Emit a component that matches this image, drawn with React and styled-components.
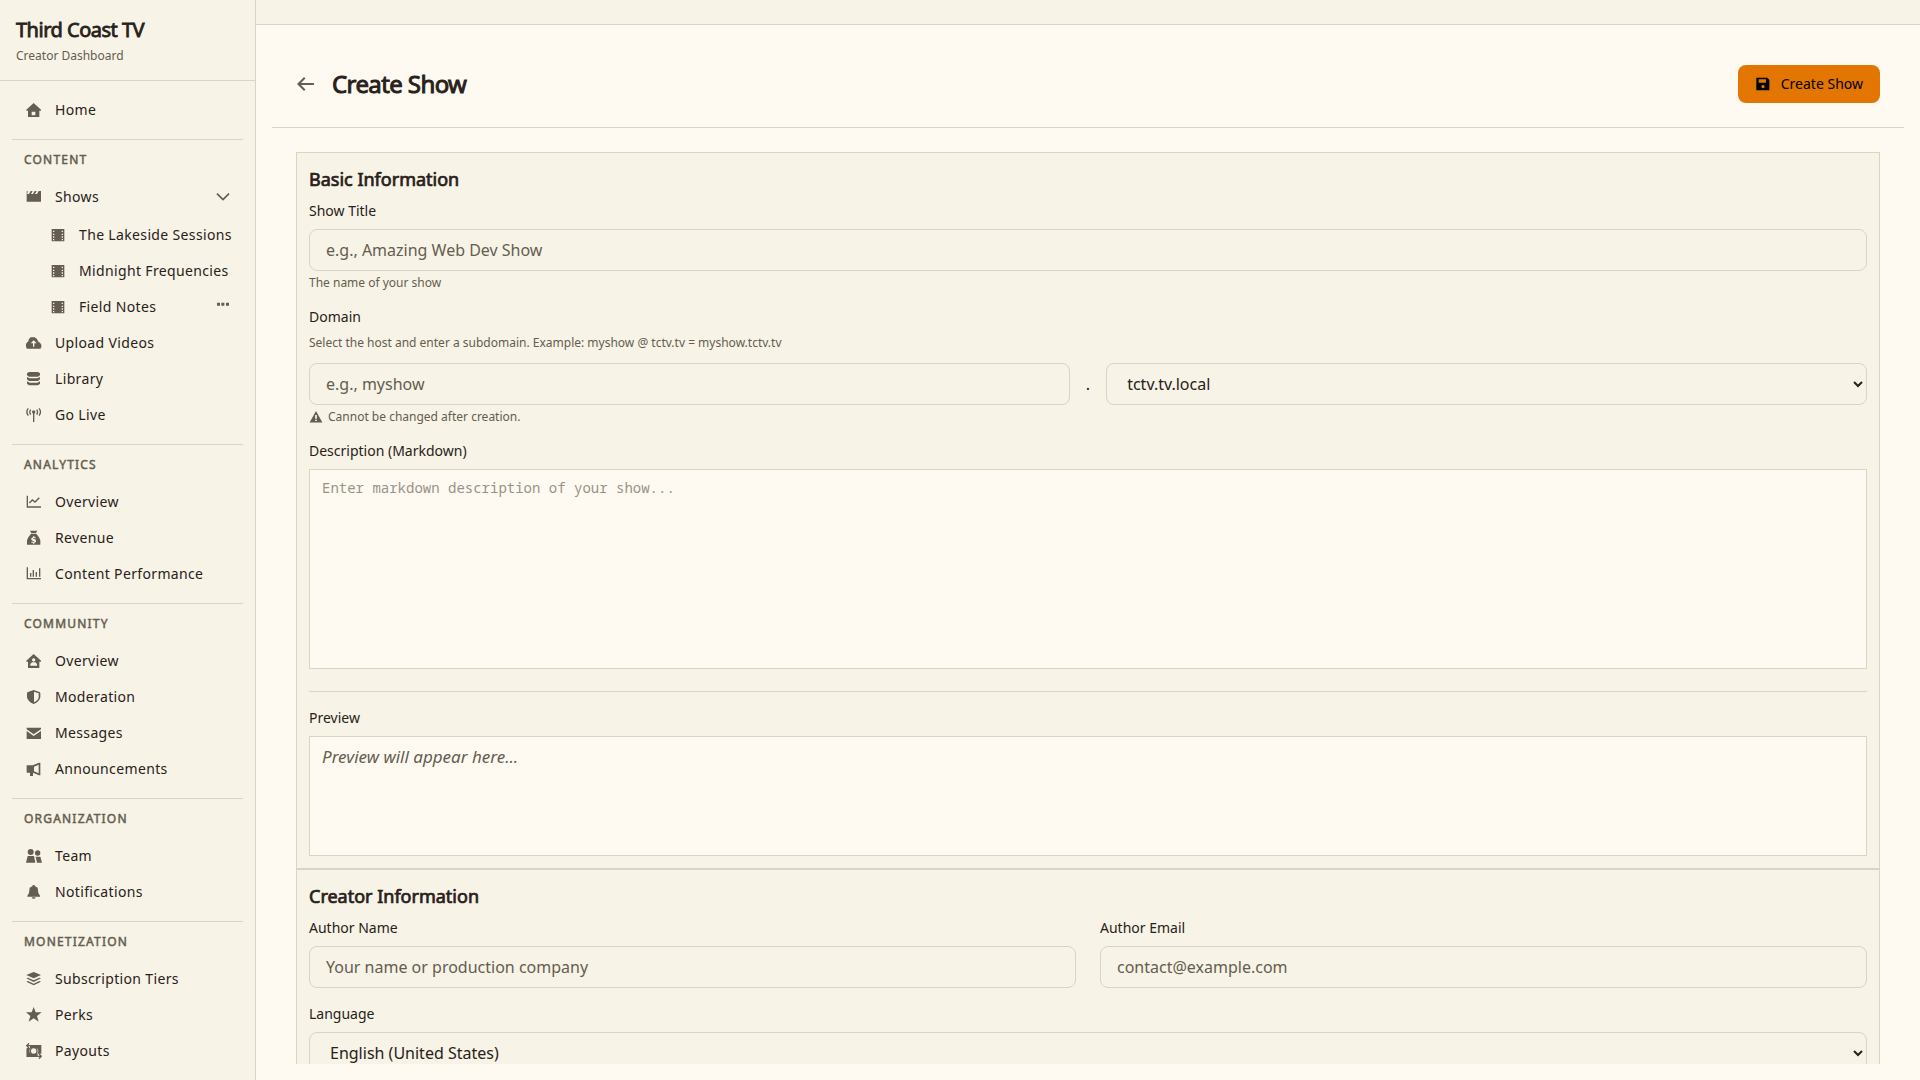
import { useState } from 'react';
import styled, { createGlobalStyle, css } from 'styled-components';

const colors = {
  page: '#fffaf1',
  panel: '#f7f3e6',
  line: '#d9d5c3',
  text: '#28211a',
  muted: '#645d50',
  accent: '#e27600',
};

const GlobalStyle = createGlobalStyle`
  * { box-sizing: border-box; }
  body { margin: 0; background: ${colors.page}; color: ${colors.text}; font-family: "Noto Sans", sans-serif; font-size: 16px; }
  h1, h2, p { margin: 0; }
`;

// headings use the regular face with a thin stroke instead of the bold face
const heavy = css`font-weight: 400; -webkit-text-stroke: 0.04em currentColor;`;

const Shell = styled.div`display: flex; height: 100vh;`;

const Sidebar = styled.aside`
  flex: 0 0 256px;
  background: ${colors.panel};
  border-right: 1px solid ${colors.line};
  overflow: auto;
  scrollbar-width: none;
`;
const Brand = styled.div`padding: 16px; border-bottom: 1px solid ${colors.line};`;
const BrandName = styled.p`${heavy} font-size: 20px; line-height: 28px; letter-spacing: -0.025em;`;
const BrandSub = styled.p`margin-top: 4px; font-size: 12px; line-height: 16px; color: ${colors.muted};`;
const Nav = styled.nav`padding: 11px 12px;`;
const NavSection = styled.div`
  & + & { margin-top: 11px; border-top: 1px solid ${colors.line}; }
`;
const NavTitle = styled.h2`
  ${heavy}
  padding: 12px 12px 11px;
  font-size: 12px;
  line-height: 16px;
  letter-spacing: 0.1em;
  text-transform: uppercase;
  color: ${colors.muted};
`;
const NavRow = styled.div`display: flex; align-items: center; height: 36px; padding: 0 11px 0 12px;`;
const NavLink = styled.a`
  display: flex;
  align-items: center;
  flex: 1;
  gap: 11px;
  color: ${colors.text};
  font-size: 14px;
  line-height: 20px;
  letter-spacing: 0.025em;
  text-decoration: none;
  white-space: nowrap;
`;
const IconBox = styled.span`display: flex; justify-content: center; flex: 0 0 20px; color: ${colors.muted};`;
const SubList = styled.div`padding: 2px 0 0 24px;`;
const IconButton = styled.button`
  display: flex;
  padding: 0;
  border: none;
  background: none;
  color: ${colors.muted};
  cursor: pointer;
`;

const Main = styled.div`flex: 1; min-width: 0; display: flex; flex-direction: column;`;
const TopBar = styled.div`flex: 0 0 25px; background: ${colors.panel}; border-bottom: 1px solid ${colors.line};`;
const Content = styled.main`flex: 1; min-height: 0; padding: 16px; display: flex;`;
const Scroller = styled.div`flex: 1; min-width: 0; overflow: auto; scrollbar-width: none;`;
const PageHeader = styled.header`
  display: flex;
  justify-content: space-between;
  align-items: center;
  padding: 24px;
  border-bottom: 1px solid ${colors.line};
`;
const TitleGroup = styled.div`display: flex; align-items: center; gap: 16px;`;
const PageTitle = styled.h1`${heavy} font-size: 24px; line-height: 32px; letter-spacing: -0.025em;`;
const SaveButton = styled.button`
  display: flex;
  align-items: center;
  gap: 10px;
  height: 38px;
  padding: 0 17px;
  border: none;
  border-radius: 8px;
  background: ${colors.accent};
  color: #000;
  font: 14px/20px "Noto Sans", sans-serif;
  cursor: pointer;
`;

const Form = styled.form`padding: 24px;`;
const Panel = styled.section`
  display: flex;
  flex-direction: column;
  gap: 16px;
  padding: 12px;
  background: ${colors.panel};
  border: 1px solid ${colors.line};
`;
const PanelTitle = styled.h2`${heavy} margin-bottom: -8px; font-size: 18px; line-height: 28px;`;
const Field = styled.div`flex: 1; min-width: 0;`;
const Label = styled.label`display: block; margin-bottom: 8px; font-size: 14px; line-height: 20px;`;
const Hint = styled.p`
  display: flex;
  align-items: center;
  gap: 5px;
  margin: ${p => p.$above ? '0 0 12px' : '4px 0 0'};
  color: ${colors.muted};
  font-size: 12px;
  line-height: 16px;
`;
const Input = styled.input`
  display: block;
  width: 100%;
  height: 42px;
  padding: 0 16px;
  border: 1px solid ${colors.line};
  border-radius: 8px;
  background: ${colors.panel};
  color: ${colors.text};
  font: 16px "Noto Sans", sans-serif;
  &::placeholder { color: ${colors.muted}; opacity: 1; }
`;
const Select = styled(Input).attrs({ as: 'select' })``;
const DomainRow = styled.div`display: flex; align-items: center; gap: 16px;`;
const Columns = styled.div`display: grid; grid-template-columns: 1fr 1fr; gap: 24px;`;
const TextArea = styled.textarea`
  display: block;
  width: 100%;
  height: 200px;
  padding: 8px 12px;
  border: 1px solid ${colors.line};
  background: ${colors.page};
  color: ${colors.text};
  font: 14px/20px "Noto Sans Mono", "DejaVu Sans Mono", monospace;
  resize: none;
  &::placeholder { color: #979388; opacity: 1; }
`;
const PreviewField = styled(Field)`
  margin-top: 6px;
  padding-top: 16px;
  border-top: 1px solid ${colors.line};
`;
const PreviewLabel = styled.p`margin-bottom: 8px; font-size: 14px; line-height: 20px;`;
const Preview = styled.div`
  min-height: 120px;
  padding: 8px 12px;
  border: 1px solid ${colors.line};
  background: ${colors.page};
  color: ${colors.muted};
  font-size: 17px;
  line-height: 24px;
  font-style: italic;
`;

const fill = { fill: 'currentColor', fillRule: 'evenodd' };
const line = (width) => ({ fill: 'none', stroke: 'currentColor', strokeWidth: width });

// all icons share a 48 unit grid
const icons = {
  home: <path {...fill} d="M23 3 45 23v3h-5v19H6V26H1v-3ZM17 29v11h11V29Z" />,
  clapper: <path {...fill} d="M2 7h4l-3 8h6l5-9h6l-5 9h6l5-9h6l-5 9h6l5-9h7v32H2Z" />,
  film: <path {...fill} d="M5 6h38v37H5Zm4 5v4h4v-4Zm0 9v4h4v-4Zm0 8v4h4v-4Zm0 8v4h4v-4ZM35 11v4h4v-4Zm0 9v4h4v-4Zm0 8v4h4v-4Zm0 8v4h4v-4Z" />,
  cloud: <path {...fill} d="M3 41 0 36V27l4-6h2l3-9 5-5h12l7 5 4 8 5 3 4 6v8l-3 4ZM23 16l-9 9h7v10h4V25h7Z" />,
  database: <g fill="currentColor"><path d="M9 3h27l6 4v6l-6 4H9l-6-4V7Z" /><path d="M3 18l8 4h23l8-4v7l-6 5H9l-6-5Z" /><path d="M3 31l8 4h23l8-4v7l-6 5H9l-6-5Z" /></g>,
  antenna: <g {...line(4)}><path d="M23 17v28" /><circle cx="23" cy="15" r="3" fill="currentColor" /><path d="M14 8q-5 7 0 15M32 8q5 7 0 15M7 4q-9 11 0 22M39 4q9 11 0 22" /></g>,
  lineChart: <path {...line(4)} d="M4 5v34h41M10 27l9-9 8 6 13-13" />,
  bag: <path {...fill} d="M12 2h22l-4 7H16ZM15 11h16l8 11 4 9v13H3V31l4-9ZM21 19v3l-5 3v4l3 3 6 2v1h-9v3h5v3h4v-3l5-2v-5l-3-3-6-2v-1h8v-3h-4v-3Z" />,
  barChart: <path {...line(4)} d="M4 4v34h41M14 21v11M22 12v20M31 18v14M41 7v25" />,
  houseUser: <path {...fill} d="M23 3 45 23v3h-5v19H6V26H1v-3ZM23 16a5 5 0 1 0 .1 0ZM13 38h20v-5l-5-5H18l-5 5Z" />,
  shield: <path {...fill} d="M23 3 38 8q5 1 5 5v12q-2 13-20 20Q5 38 3 25V13q0-4 5-5ZM24 8v32q13-6 14-15V13Z" />,
  mail: <g fill="currentColor"><path d="M2 8h43v5L23 28 2 13Z" /><path d="M2 18l21 15 22-15v24H2Z" /></g>,
  megaphone: <path {...fill} d="M2 13h18L39 5h4v38h-4l-18-8v10h-9V35H2ZM24 17v14l14 6V11Z" />,
  team: <g fill="currentColor"><circle cx="14" cy="12" r="9" /><circle cx="35" cy="15" r="8" /><path d="M5 24h19l4 20H0ZM29 26h14l5 18H33Z" /></g>,
  bell: <path {...fill} d="M20 3h6v3l9 5 2 16 5 8v3H4v-3l5-8 2-16 9-5ZM17 40h12l-3 4h-6Z" />,
  layers: <g fill="currentColor"><path d="M23 3 45 12 23 22 1 12Z" /><path d="M1 22l5-2 17 8 17-8 5 2-22 11ZM1 32l5-2 17 8 17-8 5 2-22 11Z" /></g>,
  star: <path {...fill} d="m23 0 6 16h18L33 27l5 17-15-10L8 44l5-17L0 16h17Z" />,
  payout: <g {...line(4)}><path d="M13 8H2M9 1 2 8l7 7M34 40h12M39 33l7 7-7 7" /><path d="M15 8h28v22M31 40H4V18" /><path {...fill} d="M14 8h30v22h-7a13 13 0 0 0-4-17H14ZM4 17h6a13 13 0 0 0 4 18h19v5H4Z" /><circle cx="23" cy="24" r="10" /></g>,
  chevron: <path {...line(5)} d="M3 14 21 32 39 14" />,
  dots: <path {...fill} d="M3 11h9v9H3ZM16 11h9v9h-9ZM30 11h9v9h-9Z" />,
  back: <path {...line(5)} d="M43 24H7M21 9 6 24l15 15" />,
  save: <path {...fill} d="M4 5h33l6 7v31H4ZM11 10v10h22V10ZM24 27a5 5 0 1 0 .1 0Z" />,
  warning: <path {...fill} d="M24 3 46 43H2ZM21 17v13h6V17ZM21 33v5h6v-5Z" />,
};

function Icon({ name, size = 16 }) {
  return <svg width={size} height={size} viewBox="0 0 48 48" aria-hidden="true">{icons[name]}</svg>;
}

const sections = [
  { items: [['home', 'Home']] },
  { title: 'Content', items: [['clapper', 'Shows'], ['cloud', 'Upload Videos'], ['database', 'Library'], ['antenna', 'Go Live']] },
  { title: 'Analytics', items: [['lineChart', 'Overview'], ['bag', 'Revenue'], ['barChart', 'Content Performance']] },
  { title: 'Community', items: [['houseUser', 'Overview'], ['shield', 'Moderation'], ['mail', 'Messages'], ['megaphone', 'Announcements']] },
  { title: 'Organization', items: [['team', 'Team'], ['bell', 'Notifications']] },
  { title: 'Monetization', items: [['layers', 'Subscription Tiers'], ['star', 'Perks'], ['payout', 'Payouts']] },
];
const shows = ['The Lakeside Sessions', 'Midnight Frequencies', 'Field Notes'];

function NavItem({ icon, label, children }) {
  return (
    <NavRow>
      <NavLink href="#">
        <IconBox><Icon name={icon} /></IconBox>
        {label}
      </NavLink>
      {children}
    </NavRow>
  );
}

function ShowsItem() {
  const [open, setOpen] = useState(true);

  return (
    <>
      <NavItem icon="clapper" label="Shows">
        <IconButton type="button" aria-label="Toggle shows" aria-expanded={open} onClick={() => setOpen(!open)}>
          <Icon name="chevron" />
        </IconButton>
      </NavItem>
      {open && (
        <SubList>
          {shows.map((show, i) => (
            <NavItem key={show} icon="film" label={show}>
              {i === shows.length - 1 && (
                <IconButton type="button" aria-label="More shows"><Icon name="dots" /></IconButton>
              )}
            </NavItem>
          ))}
        </SubList>
      )}
    </>
  );
}

export default function App() {
  const [form, setForm] = useState({ title: '', subdomain: '', host: 'tctv.tv.local', description: '', author: '', email: '', language: 'en-US' });
  const bind = (name) => ({ id: name, name, value: form[name], onChange: e => setForm({ ...form, [name]: e.target.value }) });

  return (
    <Shell>
      <GlobalStyle />
      <Sidebar>
        <Brand>
          <BrandName>Third Coast TV</BrandName>
          <BrandSub>Creator Dashboard</BrandSub>
        </Brand>
        <Nav>
          {sections.map(({ title, items }) => (
            <NavSection key={title || 'home'}>
              {title && <NavTitle>{title}</NavTitle>}
              {items.map(([icon, label]) => (
                label === 'Shows' ? <ShowsItem key={label} /> : <NavItem key={label} icon={icon} label={label} />
              ))}
            </NavSection>
          ))}
        </Nav>
      </Sidebar>
      <Main>
        <TopBar />
        <Content>
          <Scroller>
            <PageHeader>
              <TitleGroup>
                <IconButton type="button" aria-label="Back"><Icon name="back" size={20} /></IconButton>
                <PageTitle>Create Show</PageTitle>
              </TitleGroup>
              <SaveButton type="submit" form="show-form"><Icon name="save" />Create Show</SaveButton>
            </PageHeader>
            <Form id="show-form" onSubmit={e => e.preventDefault()}>
              <Panel>
                <PanelTitle>Basic Information</PanelTitle>
                <Field>
                  <Label htmlFor="title">Show Title</Label>
                  <Input {...bind('title')} placeholder="e.g., Amazing Web Dev Show" />
                  <Hint>The name of your show</Hint>
                </Field>
                <Field>
                  <Label htmlFor="subdomain">Domain</Label>
                  <Hint $above>Select the host and enter a subdomain. Example: myshow @ tctv.tv = myshow.tctv.tv</Hint>
                  <DomainRow>
                    <Field><Input {...bind('subdomain')} placeholder="e.g., myshow" /></Field>
                    <span>.</span>
                    <Field>
                      <Select {...bind('host')} aria-label="Host">
                        <option>tctv.tv.local</option>
                      </Select>
                    </Field>
                  </DomainRow>
                  <Hint><Icon name="warning" size={14} />Cannot be changed after creation.</Hint>
                </Field>
                <Field>
                  <Label htmlFor="description">Description (Markdown)</Label>
                  <TextArea {...bind('description')} placeholder="Enter markdown description of your show..." />
                </Field>
                <PreviewField>
                  <PreviewLabel>Preview</PreviewLabel>
                  <Preview>{form.description || 'Preview will appear here...'}</Preview>
                </PreviewField>
              </Panel>
              <Panel>
                <PanelTitle>Creator Information</PanelTitle>
                <Columns>
                  <Field>
                    <Label htmlFor="author">Author Name</Label>
                    <Input {...bind('author')} placeholder="Your name or production company" />
                  </Field>
                  <Field>
                    <Label htmlFor="email">Author Email</Label>
                    <Input {...bind('email')} type="email" placeholder="contact@example.com" />
                  </Field>
                </Columns>
                <Field>
                  <Label htmlFor="language">Language</Label>
                  <Select {...bind('language')}>
                    <option value="en-US">English (United States)</option>
                  </Select>
                </Field>
              </Panel>
            </Form>
          </Scroller>
        </Content>
      </Main>
    </Shell>
  );
}
